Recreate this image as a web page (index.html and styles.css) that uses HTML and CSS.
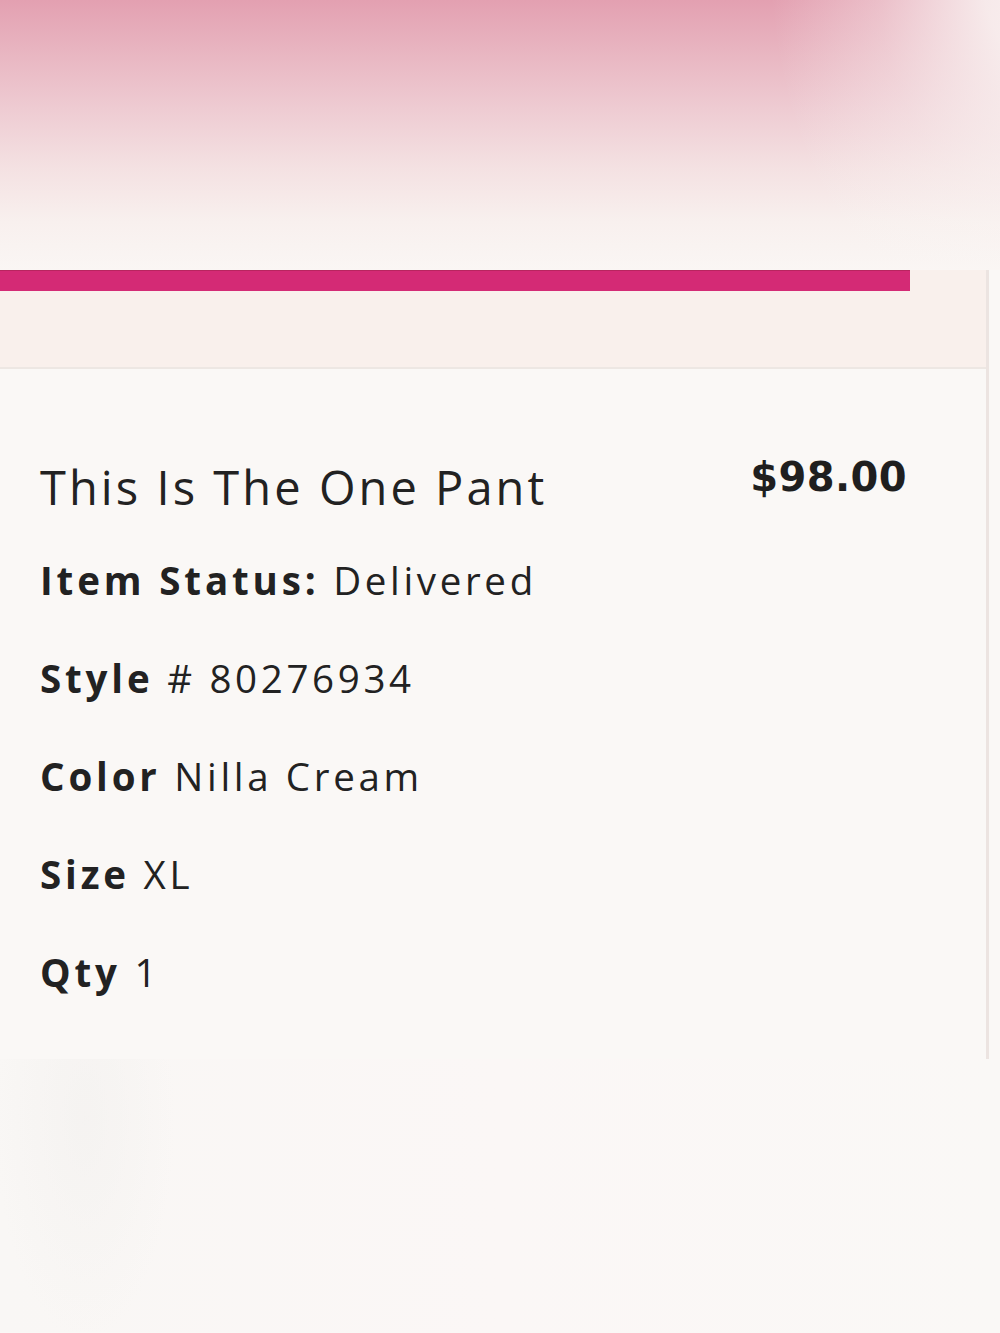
FILE: index.html
```html
<!DOCTYPE html>
<html lang="en">
<head>
<meta charset="utf-8">
<title>Order item</title>
<link rel="stylesheet" href="styles.css">
</head>
<body>
<div class="hero"></div>
<section class="card">
  <div class="progress">
    <div class="progress-bar"></div>
  </div>
  <div class="card-body">
    <div class="item-head">
      <h2 class="item-name">This Is The One Pant</h2>
      <div class="item-price">$98.00</div>
    </div>
    <ul class="details">
      <li><span class="label">Item Status:</span> Delivered</li>
      <li><span class="label">Style</span> # 80276934</li>
      <li><span class="label">Color</span> Nilla Cream</li>
      <li><span class="label">Size</span> XL</li>
      <li><span class="label">Qty</span> 1</li>
    </ul>
  </div>
</section>
<div class="footer-space"></div>
</body>
</html>
```

FILE: styles.css
```css
html, body {
  margin: 0;
  padding: 0;
}
body {
  background: #faf8f6;
  font-family: "Open Sans", "Liberation Sans", sans-serif;
  color: #222222;
  width: 1000px;
  overflow: hidden;
}
.hero {
  height: 270px;
  background:
    radial-gradient(ellipse 300px 420px at 1070px -40px, rgba(250,246,244,1) 0%, rgba(250,246,244,0.85) 30%, rgba(250,246,244,0.35) 65%, rgba(250,246,244,0) 100%),
    linear-gradient(to bottom, #e3a0b1 0%, #e8b4c0 18%, #eecbd2 40%, #f4e1e2 62%, #f8f0ee 82%, #faf6f4 100%);
}
.card {
  width: 986px;
  border-right: 3px solid #ece4e1;
  background: #faf8f6;
}
.progress {
  height: 97px;
  background: #f9f0ec;
  border-bottom: 2px solid #ede7e3;
}
.progress-bar {
  width: 910px;
  height: 21px;
  background: #d42a75;
  box-shadow: inset 0 1px 0 #b8255f;
}
.card-body {
  padding: 88px 79px 0 40px;
  height: 602px;
}
.item-head {
  display: flex;
  justify-content: space-between;
  align-items: flex-start;
}
.item-name {
  margin: 0;
  font-size: 47px;
  line-height: 60px;
  font-weight: 400;
  letter-spacing: 0.065em;
  color: #222222;
}
.item-price {
  font-family: "DejaVu Sans", "Open Sans", sans-serif;
  font-size: 40px;
  line-height: 40px;
  font-weight: 700;
  letter-spacing: 0.01em;
  color: #1f1f1f;
}
.details {
  list-style: none;
  margin: 14px 0 0 0;
  padding: 0;
}
.details li {
  font-size: 38.5px;
  line-height: 98px;
  letter-spacing: 0.095em;
  color: #222222;
}
.label {
  font-weight: 700;
  letter-spacing: 0.1em;
}
.footer-space {
  height: 273px;
  background:
    radial-gradient(ellipse 90px 220px at 85px 60px, rgba(243,241,239,0.7) 0%, rgba(243,241,239,0) 100%),
    linear-gradient(to right, #f9f7f5 0%, #fbf7f6 50%, #faf8f6 100%);
}
```
